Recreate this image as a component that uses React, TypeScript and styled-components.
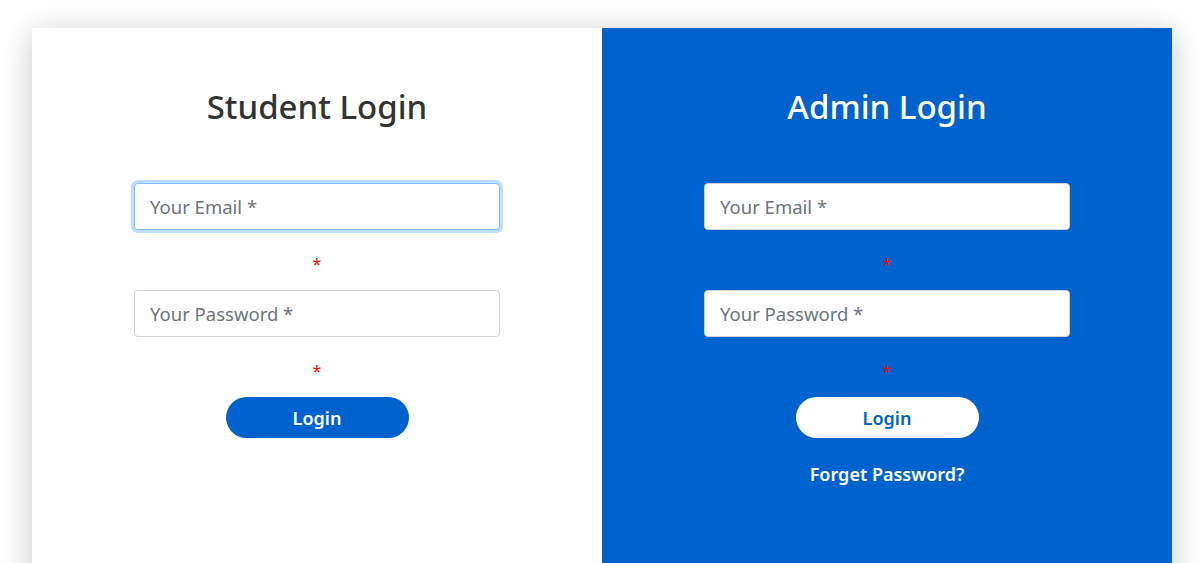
import React from "react";
import styled, { createGlobalStyle } from "styled-components";

const Global = createGlobalStyle`
  html, body { margin: 0; padding: 0; background: #fff; }
  body { font-family: "Noto Sans", "Open Sans", sans-serif; overflow: hidden; }
  * { box-sizing: border-box; }
`;

const Page = styled.div`
  padding-top: 28px;
  display: flex;
  justify-content: center;
`;

const Card = styled.div`
  width: 1140px;
  height: 560px;
  display: grid;
  grid-template-columns: 1fr 1fr;
  box-shadow: 0 5px 30px rgba(0, 0, 0, 0.22);
`;

const Panel = styled.div<{ $admin?: boolean }>`
  background: ${(p) => (p.$admin ? "#0062cc" : "#ffffff")};
  display: flex;
  flex-direction: column;
  align-items: center;
  padding-top: 58px;
`;

const Title = styled.h3<{ $admin?: boolean }>`
  margin: 0 0 55px;
  font-size: 33px;
  font-weight: 500;
  line-height: 42px;
  color: ${(p) => (p.$admin ? "#ffffff" : "#333333")};
`;

const Input = styled.input<{ $focused?: boolean }>`
  width: 366px;
  height: 47px;
  padding: 0 15px;
  font-family: inherit;
  font-size: 18.5px;
  color: #495057;
  background: #fff;
  border: 1px solid ${(p) => (p.$focused ? "#80bdff" : "#ced4da")};
  border-radius: 4px;
  outline: none;
  box-shadow: ${(p) => (p.$focused ? "0 0 0 3px rgba(0, 123, 255, 0.25)" : "none")};
  &::placeholder { color: #6c757d; }
`;

const Required = styled.div`
  height: 60px;
  padding-top: 24px;
  font-size: 16px;
  line-height: 20px;
  color: #ff0000;
`;

const Button = styled.button<{ $admin?: boolean }>`
  width: 183px;
  height: 41px;
  border: none;
  border-radius: 21px;
  font-family: inherit;
  font-size: 18px;
  font-weight: 600;
  background: ${(p) => (p.$admin ? "#ffffff" : "#0062cc")};
  color: ${(p) => (p.$admin ? "#0062cc" : "#ffffff")};
  cursor: pointer;
`;

const Forget = styled.a`
  margin-top: 24px;
  font-size: 18px;
  font-weight: 600;
  color: #ffffff;
  text-decoration: none;
`;

export default function App() {
  return (
    <>
      <Global />
      <Page>
        <Card>
          <Panel>
            <Title>Student Login</Title>
            <Input $focused placeholder="Your Email *" />
            <Required>*</Required>
            <Input type="password" placeholder="Your Password *" />
            <Required>*</Required>
            <Button>Login</Button>
          </Panel>
          <Panel $admin>
            <Title $admin>Admin Login</Title>
            <Input placeholder="Your Email *" />
            <Required>*</Required>
            <Input type="password" placeholder="Your Password *" />
            <Required>*</Required>
            <Button $admin>Login</Button>
            <Forget href="#">Forget Password?</Forget>
          </Panel>
        </Card>
      </Page>
    </>
  );
}
